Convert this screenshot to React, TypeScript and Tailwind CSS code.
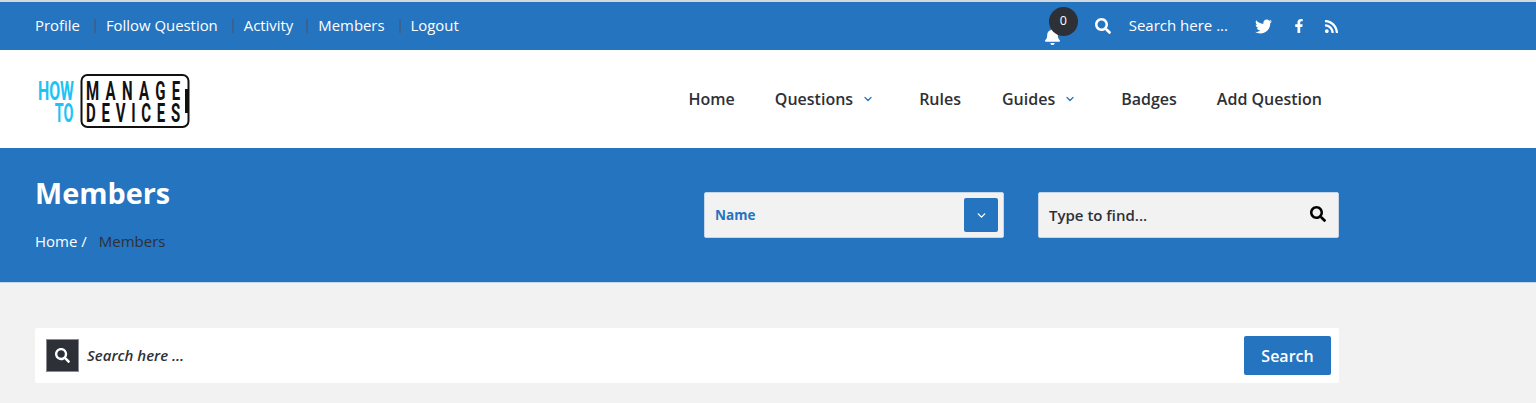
import { FaTwitter, FaFacebookF, FaRss, FaSearch, FaBell } from "react-icons/fa";
import { ChevronDown } from "lucide-react";

const font = { fontFamily: '"Open Sans", sans-serif' };

function Logo() {
  return (
    <svg width="156" height="54" viewBox="0 0 156 54" className="block">
      <g style={{ fontFamily: '"Roboto", sans-serif', fontWeight: 700 }} fontSize="25">
        <g transform="scale(0.6 1)">
          <text x="5" y="26" fill="#1cc4f5" textLength="60" lengthAdjust="spacingAndGlyphs">HOW</text>
          <text x="33" y="48" fill="#1cc4f5" textLength="31" lengthAdjust="spacingAndGlyphs">TO</text>
          <text x="85" y="26" fill="#111" textLength="157" lengthAdjust="spacing">MANAGE</text>
          <text x="85" y="48" fill="#111" textLength="157" lengthAdjust="spacing">DEVICES</text>
        </g>
        <rect x="46.5" y="1" width="107" height="52" rx="6" fill="none" stroke="#111" strokeWidth="2" />
        <rect x="150" y="15" width="3.5" height="24" fill="#111" />
      </g>
    </svg>
  );
}

const topLinks = ["Profile", "Follow Question", "Activity", "Members", "Logout"];

function Nav({ label, caret, cls }: { label: string; caret?: boolean; cls: string }) {
  return (
    <div className={`flex items-center ${cls}`}>
      <span>{label}</span>
      {caret && <ChevronDown className="ml-[9px] mt-[1px] text-[#2474c0]" size={12} strokeWidth={2.5} />}
    </div>
  );
}

export default function App() {
  return (
    <div className="w-[1536px] h-[403px] overflow-hidden bg-[#f2f2f2]" style={font}>
      <div className="h-[2px] bg-[#d4d8dc]" />
      <div className="h-[48px] bg-[#2474c0] pl-[35px] pr-[197px] flex items-center justify-between text-white text-[15px]">
        <div className="flex items-center mb-[2px] text-[14.9px]">
          {topLinks.map((l, i) => (
            <div key={l} className="flex items-center">
              {i > 0 && (
                <span className={`w-[2px] h-[14px] bg-[#3a6291] mt-[2px] mr-[10px] ${i === 3 ? "ml-[13px]" : "ml-[14px]"}`} />
              )}
              <span>{l}</span>
            </div>
          ))}
        </div>
        <div className="flex items-center">
          <div className="relative w-[18px] h-[18px] mr-[33px] mt-[22px]">
            <FaBell size={17} className="text-white" />
            <span className="absolute left-[5px] top-[-21px] w-[29px] h-[29px] rounded-full bg-[#2e3037] flex items-center justify-center text-[12.5px] font-medium">
              0
            </span>
          </div>
          <FaSearch size={16} className="mr-[18px]" />
          <span className="mr-[27px] mb-[1px]">Search here ...</span>
          <FaTwitter size={17} className="mr-[20px]" />
          <FaFacebookF size={14} className="mr-[18px]" />
          <FaRss size={15} />
        </div>
      </div>
      <div className="h-[98px] bg-white pl-[35px] pr-[214px] flex items-center justify-between">
        <div className="mt-[3px]">
          <Logo />
        </div>
        <div className="flex items-center text-[16px] font-semibold text-[#2e3037] mb-[1px]">
          <Nav label="Home" cls="mr-[40px]" />
          <Nav label="Questions" caret cls="mr-[45px]" />
          <Nav label="Rules" cls="mr-[41px]" />
          <Nav label="Guides" caret cls="mr-[45px]" />
          <Nav label="Badges" cls="mr-[40px]" />
          <Nav label="Add Question" cls="" />
        </div>
      </div>
      <div className="h-[135px] bg-[#2474c0] border-b border-[#c5d6e8] px-[35px] flex justify-between">
        <div className="text-white">
          <h1 className="text-[28.8px] font-bold leading-[38px] mt-[26px]">Members</h1>
          <div className="mt-[19px] text-[15px] leading-[20px]">
            <span>Home /</span>
            <span className="ml-[12px] text-[#2e3037]">Members</span>
          </div>
        </div>
        <div className="flex items-start mt-[44px] mr-[162px] gap-[34px]">
          <div className="w-[300px] h-[46px] bg-[#f2f2f2] rounded-[2px] border border-[#c5d6e8] flex items-center justify-between pl-[10px] pr-[5px]">
            <span className="text-[13.5px] font-bold text-[#2474c0]">Name</span>
            <span className="w-[34px] h-[34px] bg-[#2474c0] rounded-[2px] flex items-center justify-center text-white">
              <ChevronDown size={13} strokeWidth={2.5} />
            </span>
          </div>
          <div className="w-[301px] h-[46px] bg-[#f2f2f2] rounded-[2px] border border-[#c5d6e8] flex items-center justify-between pl-[10px] pr-[12px]">
            <span className="text-[15px] font-semibold text-[#2e3037]">Type to find...</span>
            <FaSearch size={16} className="text-black mb-[3px]" />
          </div>
        </div>
      </div>
      <div className="px-[35px] pt-[45px]">
        <div className="w-[1304px] h-[55px] bg-white rounded-[2px] flex items-center justify-between pl-[11px] pr-[8px]">
          <div className="flex items-center">
            <span className="w-[33px] h-[33px] bg-[#2e3037] border border-[#8a8c92] flex items-center justify-center text-white">
              <FaSearch size={15} />
            </span>
            <span className="ml-[8px] text-[15px] font-semibold italic text-[#2e3037]">Search here ...</span>
          </div>
          <button className="w-[87px] h-[39px] bg-[#2474c0] rounded-[2px] text-white text-[16px] font-semibold">Search</button>
        </div>
      </div>
    </div>
  );
}
